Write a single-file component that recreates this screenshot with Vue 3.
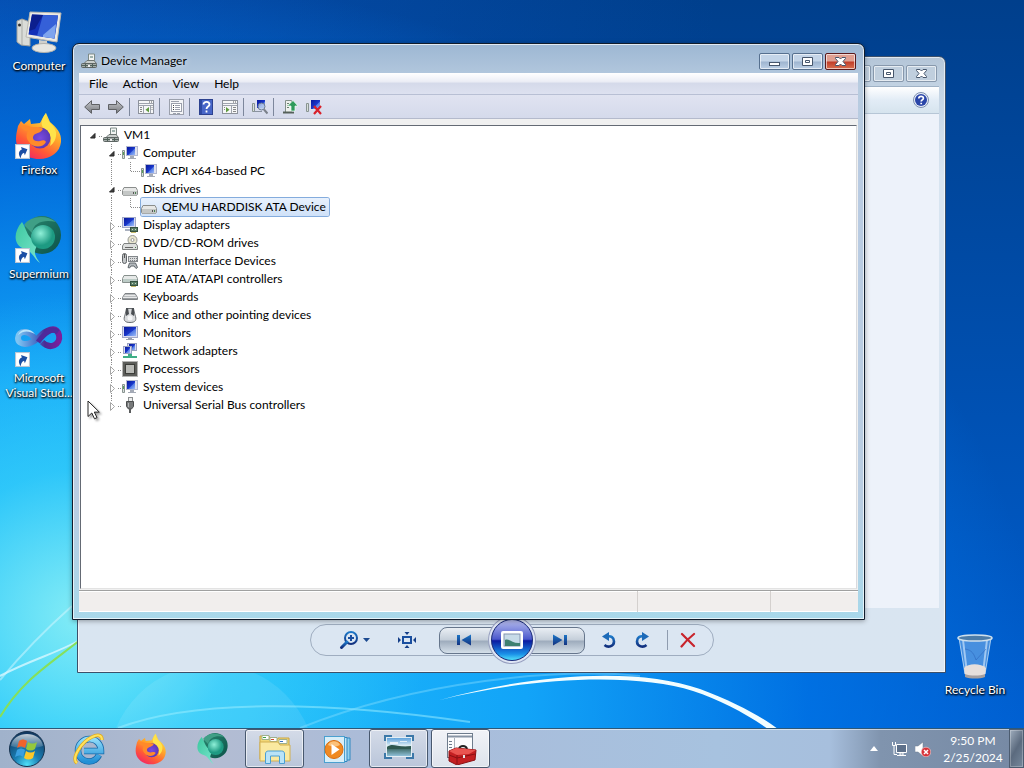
<script setup>
import { ref } from 'vue'

const shortcuts = [
  { label: 'Computer', icon: 'pc-big' },
  { label: 'Firefox', icon: 'firefox', link: true },
  { label: 'Supermium', icon: 'supermium', link: true },
  { label: 'Microsoft Visual Stud...', icon: 'vs', link: true },
]

const menus = ['File', 'Action', 'View', 'Help']

// groups are divided by a thin separator
const tools = [
  [{ icon: 'back', title: 'Back' }, { icon: 'forward', title: 'Forward' }],
  [{ icon: 'pane-left', title: 'Show/Hide Console Tree' }],
  [{ icon: 'props', title: 'Properties' }],
  [{ icon: 'help', title: 'Help' }, { icon: 'pane-right', title: 'Show/Hide Action Pane' }],
  [{ icon: 'scan', title: 'Scan for hardware changes' }],
  [{ icon: 'update', title: 'Update driver' }, { icon: 'uninstall', title: 'Uninstall' }],
]

const nodes = [
  { label: 'VM1', icon: 'toolcase', level: 0, open: true },
  { label: 'Computer', icon: 'pc', level: 1, open: true },
  { label: 'ACPI x64-based PC', icon: 'pc', level: 2 },
  { label: 'Disk drives', icon: 'disk', level: 1, open: true },
  { label: 'QEMU HARDDISK ATA Device', icon: 'disk', level: 2 },
  { label: 'Display adapters', icon: 'display', level: 1 },
  { label: 'DVD/CD-ROM drives', icon: 'dvd', level: 1 },
  { label: 'Human Interface Devices', icon: 'hid', level: 1 },
  { label: 'IDE ATA/ATAPI controllers', icon: 'ide', level: 1 },
  { label: 'Keyboards', icon: 'keyboard', level: 1 },
  { label: 'Mice and other pointing devices', icon: 'mouse', level: 1 },
  { label: 'Monitors', icon: 'monitor', level: 1 },
  { label: 'Network adapters', icon: 'network', level: 1 },
  { label: 'Processors', icon: 'cpu', level: 1 },
  { label: 'System devices', icon: 'pc', level: 1 },
  { label: 'Universal Serial Bus controllers', icon: 'usb', level: 1, last: true },
]
const selected = ref('QEMU HARDDISK ATA Device')

const apps = [
  { icon: 'ie', title: 'Internet Explorer' },
  { icon: 'firefox', title: 'Firefox' },
  { icon: 'supermium', title: 'Supermium' },
  { icon: 'explorer', title: 'Windows Explorer', running: true },
  { icon: 'media', title: 'Windows Media Player' },
  { icon: 'photos', title: 'Windows Photo Viewer', running: true },
  { icon: 'toolbox', title: 'Device Manager', running: true, active: true },
]
</script>

<template>
  <!-- icon sheet -->
  <svg class="sheet" aria-hidden="true">
    <defs>
      <linearGradient id="g-screen" x1="0" y1="0" x2="1" y2="1">
        <stop offset="0" stop-color="#08189a" /><stop offset=".55" stop-color="#1a38cc" />
        <stop offset=".6" stop-color="#5078e4" /><stop offset="1" stop-color="#9dbcf8" />
      </linearGradient>
      <linearGradient id="g-arrow" x1="0" y1="0" x2="0" y2="1">
        <stop offset="0" stop-color="#c4c6ca" /><stop offset="1" stop-color="#77797e" />
      </linearGradient>
      <linearGradient id="g-fox" x1=".8" y1="0" x2=".2" y2="1">
        <stop offset="0" stop-color="#fff04a" /><stop offset=".4" stop-color="#ffa42a" />
        <stop offset=".7" stop-color="#ff5a36" /><stop offset="1" stop-color="#f0206a" />
      </linearGradient>
      <radialGradient id="g-foxcore"><stop offset="0" stop-color="#7a4be0" /><stop offset="1" stop-color="#5a38b8" /></radialGradient>
      <linearGradient id="g-sup" x1="0" y1="0" x2="1" y2="1">
        <stop offset="0" stop-color="#2b8a72" /><stop offset="1" stop-color="#0b5148" />
      </linearGradient>
      <linearGradient id="g-supleaf" x1="0" y1="0" x2="1" y2="1">
        <stop offset="0" stop-color="#3cc79f" /><stop offset="1" stop-color="#7be6cd" />
      </linearGradient>
      <radialGradient id="g-supball" cx=".4" cy=".35"><stop offset="0" stop-color="#8ff0d8" /><stop offset="1" stop-color="#1d9a82" /></radialGradient>
      <linearGradient id="g-vs" x1="0" y1="0" x2="1" y2="0">
        <stop offset="0" stop-color="#7fc4f2" /><stop offset=".4" stop-color="#4a78cc" />
        <stop offset=".65" stop-color="#4b2a94" /><stop offset="1" stop-color="#7a1f9c" />
      </linearGradient>
      <radialGradient id="g-orb" cx=".5" cy=".95" r=".9">
        <stop offset="0" stop-color="#4fe0f8" /><stop offset=".4" stop-color="#1a7fb4" /><stop offset="1" stop-color="#123a62" />
      </radialGradient>
      <linearGradient id="g-orbgloss" x1="0" y1="0" x2="0" y2="1">
        <stop offset="0" stop-color="#fff" stop-opacity=".75" /><stop offset="1" stop-color="#fff" stop-opacity=".1" />
      </linearGradient>
      <linearGradient id="g-ie" x1="0" y1="0" x2="0" y2="1">
        <stop offset="0" stop-color="#8fdcfa" /><stop offset="1" stop-color="#2390d6" />
      </linearGradient>
      <linearGradient id="g-photo" x1="0" y1="0" x2="0" y2="1">
        <stop offset="0" stop-color="#5fa2dc" /><stop offset=".45" stop-color="#e4f2f6" />
        <stop offset=".55" stop-color="#38645e" /><stop offset="1" stop-color="#8fc0d8" />
      </linearGradient>
      <linearGradient id="g-blue" x1="0" y1="0" x2="0" y2="1">
        <stop offset="0" stop-color="#1d78c8" /><stop offset="1" stop-color="#12307e" />
      </linearGradient>
    </defs>

    <symbol id="i-toolcase" viewBox="0 0 16 16">
      <path d="M7.500 8V1h6v7" fill="#f2f4f2" stroke="#7d8a86" />
      <rect x="9" y="3" width="3" height="2" fill="#9fb3ae" />
      <path d="M3 10.500 6 7.500h7l2.500 3z" fill="#c9cecb" stroke="#6d7572" />
      <rect x=".5" y="10.500" width="15" height="4" rx="1" fill="#a6adaa" stroke="#5d6563" />
      <path d="M1 12.500h14M4.500 11v3M11.500 11v3" stroke="#50615a" />
      <rect x="7" y="12" width="2" height="2" fill="#eee" />
    </symbol>
    <symbol id="i-pc" viewBox="0 0 16 16">
      <path d="M.5 5.500h2v8h-2z" fill="#d9dfdc" stroke="#899491" />
      <rect x="1" y="7" width="1" height="3" fill="#58a058" />
      <rect x="4.500" y="1.500" width="11" height="9" fill="#dfe1ee" stroke="#b4b9d0" />
      <rect x="5" y="2" width="8" height="8" fill="url(#g-screen)" />
      <path d="M8 11h4v2h-4zM6 13h8v1H6z" fill="#a4aab6" />
    </symbol>
    <symbol id="i-monitor" viewBox="0 0 16 16">
      <rect x=".5" y="1.500" width="15" height="11" fill="#d8dbf0" stroke="#a2a9c8" />
      <rect x="2" y="2" width="12" height="9" fill="url(#g-screen)" />
      <path d="M6 13h4v1h-4zM4 14h8v1H4z" fill="#9aa1af" />
    </symbol>
    <symbol id="i-disk" viewBox="0 0 16 16">
      <path d="M2 6.500h12l1.500 3v4l-1 1h-13l-1-1v-4z" fill="#e6e7e6" stroke="#8a8d8c" />
      <path d="M1 10h14v3.500l-1 1H2l-1-1z" fill="#c4c7c6" />
      <rect x="11" y="11" width="1" height="2" fill="#555" /><rect x="13" y="11" width="1" height="2" fill="#4a8050" />
    </symbol>
    <symbol id="i-chip" viewBox="0 0 16 16">
      <rect x="8.500" y="10.500" width="7" height="4" fill="#5b7e68" stroke="#35513f" />
      <path d="M10 12h1v1h-1zM13 12h1v1h-1z" fill="#c6d8bf" />
      <path d="M9 15.500h5" stroke="#c7bb6c" />
    </symbol>
    <symbol id="i-display" viewBox="0 0 16 16">
      <rect x=".5" y=".5" width="13" height="10" fill="#d8dbf0" stroke="#a2a9c8" />
      <rect x="2" y="1" width="10" height="8" fill="url(#g-screen)" />
      <path d="M3 12h6v2H3z" fill="#aab1bf" />
      <use href="#i-chip" />
    </symbol>
    <symbol id="i-dvd" viewBox="0 0 16 16">
      <circle cx="10.500" cy="5" r="4.500" fill="#e9e6cf" stroke="#969894" /><circle cx="10.500" cy="5" r="1.500" fill="#fff" stroke="#9a9a9a" />
      <path d="M2 8.500h12l1.500 2.500v3.500H.5V11z" fill="#dcdedd" stroke="#7f8281" />
      <path d="M3 12.500h8" stroke="#666" /><rect x="13" y="12" width="1" height="1" fill="#4a8050" />
    </symbol>
    <symbol id="i-hid" viewBox="0 0 16 16">
      <rect x="6.500" y="3.500" width="9" height="5" fill="#d9dbdc" stroke="#83878b" />
      <path d="M8 5.500h7M8 7.500h7" stroke="#7d8084" stroke-dasharray="1 1" />
      <rect x=".5" y=".5" width="4" height="10" rx="2" fill="#c3c6c8" stroke="#5e6265" />
      <path d="M2.500 1v4" stroke="#555" />
      <path d="M6 14.500 7.500 10h6l2 4.500-1.500 1-2-2.500H9l-1.500 2z" fill="#b4b9bd" stroke="#5f666b" />
    </symbol>
    <symbol id="i-ide" viewBox="0 0 16 16">
      <path d="M2 4.500h12l1.500 3v4h-15v-4z" fill="#e6e9e8" stroke="#87908d" />
      <path d="M1 8h14v3H1z" fill="#bccbc6" />
      <use href="#i-chip" />
    </symbol>
    <symbol id="i-keyboard" viewBox="0 0 16 16">
      <path d="M3 4.500h10l2.500 4v2H.5v-2z" fill="#e8e9ea" stroke="#7f8386" />
      <path d="M3.500 5.500h10M2.500 7.500h12" stroke="#8b8f92" stroke-dasharray="1 1" />
      <path d="M1 9.500h14" stroke="#9a9ea1" />
    </symbol>
    <symbol id="i-mouse" viewBox="0 0 16 16">
      <path d="M4.500 1.500 3 8c-2 5-.5 7.500 5 7.500s7-2.500 5-7.500l-1.500-6.500z" fill="#d9dbdd" stroke="#6a6e71" />
      <path d="M4 1h2l1 6-3 2zM12 1h-2L9 7l3 2z" fill="#4a4e52" /><ellipse cx="8" cy="11" rx="2.500" ry="2.500" fill="#f4f5f6" />
    </symbol>
    <symbol id="i-network" viewBox="0 0 16 16">
      <rect x="5.500" y=".5" width="9" height="7" fill="#d8dbf0" stroke="#9aa2c0" /><rect x="7" y="1" width="6" height="6" fill="url(#g-screen)" />
      <rect x="1.500" y="3.500" width="8" height="7" fill="#d8dbf0" stroke="#9aa2c0" /><rect x="3" y="4" width="5" height="6" fill="url(#g-screen)" />
      <path d="M6 11h4v2h5v2H1v-2h5z" fill="#3fae86" />
    </symbol>
    <symbol id="i-cpu" viewBox="0 0 16 16">
      <rect x=".5" y=".5" width="15" height="15" fill="none" stroke="#6a6b68" stroke-dasharray="1 1" />
      <rect x="1" y="1" width="14" height="14" fill="#5c5d5a" /><rect x="3.500" y="3.500" width="9" height="9" fill="#b9bab6" stroke="#3c3d39" />
    </symbol>
    <symbol id="i-usb" viewBox="0 0 16 16">
      <rect x="6.500" y=".5" width="4" height="4" fill="#eceded" stroke="#8c8f90" />
      <path d="M4.500 4.500h7v5L9.500 12h-3l-2-2.500z" fill="#77797a" stroke="#4c4e4f" /><rect x="7" y="12" width="2" height="4" fill="#5a5c5d" />
      <path d="M6 6h1v4H6z" fill="#b7b9ba" />
    </symbol>

    <symbol id="i-back" viewBox="0 0 16 16">
      <path d="M.7 8 7.500 1.700v3.800h8v5h-8v3.800z" fill="url(#g-arrow)" stroke="#5f6165" stroke-linejoin="round" />
    </symbol>
    <symbol id="i-forward" viewBox="0 0 16 16">
      <path d="M15.300 8 8.500 1.700v3.800h-8v5h8v3.800z" fill="url(#g-arrow)" stroke="#5f6165" stroke-linejoin="round" />
    </symbol>
    <symbol id="i-pane" viewBox="0 0 16 16">
      <rect x=".5" y="1.500" width="15" height="13" fill="#f6f7f8" stroke="#8d929c" />
      <path d="M1 4.500h14M1 6.500h14" stroke="#9fa4ae" /><path d="M11 3h1M13 3h1" stroke="#555" />
    </symbol>
    <symbol id="i-pane-left" viewBox="0 0 16 16">
      <use href="#i-pane" /><path d="M5.500 7v7M12.500 7v7" stroke="#9fa4ae" />
      <path d="M2 8.500h2M2 10.500h2M2 12.500h2M13.500 8.500h1M13.500 10.500h1" stroke="#888" /><path d="M11 8v5.500L7.500 10.700z" fill="#5e9a3e" />
    </symbol>
    <symbol id="i-pane-right" viewBox="0 0 16 16">
      <use href="#i-pane" /><path d="M9.500 7v7" stroke="#9fa4ae" />
      <path d="M11 8.500h3M11 10.500h3M11 12.500h3M2 8.500h1M2 10.500h1" stroke="#888" /><path d="M4 8v5.500l3.500-2.800z" fill="#5e9a3e" />
    </symbol>
    <symbol id="i-props" viewBox="0 0 16 16">
      <rect x="1.500" y=".5" width="14" height="15" fill="#f4f5f7" stroke="#9ba0ac" />
      <rect x="3.500" y="4.500" width="10" height="8" fill="#fff" stroke="#9ba0ac" />
      <path d="M3 2.500h8M7 6.500h5M7 8.500h5M7 10.500h5M5 14.500h3M9 14.500h3" stroke="#9ba0ac" /><path d="M5 6.500h1M5 8.500h1M5 10.500h1" stroke="#444" />
    </symbol>
    <symbol id="i-help" viewBox="0 0 16 16">
      <rect x="1.500" y=".5" width="13" height="15" fill="#4766c8" stroke="#2c418f" /><path d="M2 1h2v14H2z" fill="#2f4aa4" />
      <path d="M5.500 5.500C5.500 2 11.500 2.200 11.500 5.500c0 2-3 2.200-3 4.500M8.500 11.500v2" fill="none" stroke="#fff" stroke-width="1.800" />
    </symbol>
    <symbol id="i-scan" viewBox="0 0 16 16">
      <path d="M.5 4.500h2v8h-2z" fill="#d9dfdc" stroke="#899491" />
      <rect x="4" y="1" width="10" height="9" fill="#dfe2ea" /><rect x="5" y="1" width="8" height="8" fill="url(#g-screen)" />
      <path d="M2 12.500h8" stroke="#8a93a0" /><circle cx="9.500" cy="7.500" r="3.500" fill="#b9cdec" fill-opacity=".8" stroke="#6c7a90" />
      <path d="m12 10.500 3.500 4" stroke="#7a808a" stroke-width="2" />
    </symbol>
    <symbol id="i-update" viewBox="0 0 16 16">
      <path d="M3.500 13V1.500h6V13" fill="#eef1ee" stroke="#84908a" /><path d="M5 4.500h2M5 6.500h2M5 8.500h2" stroke="#6b7d70" />
      <path d="M1 13.500h11" stroke="#55605a" stroke-width="2" />
      <path d="M11 1.500 5.500 7H9v5h4V7h3z" fill="#2f9a5c" stroke="#f0fff4" stroke-width=".7" />
    </symbol>
    <symbol id="i-uninstall" viewBox="0 0 16 16">
      <path d="M.5 4.500h2v8h-2z" fill="#d9dfdc" stroke="#899491" />
      <rect x="4" y="1" width="11" height="10" fill="#dfe2ea" /><rect x="5" y="1" width="9" height="9" fill="url(#g-screen)" />
      <path d="m8 7 7 8M15 7l-7 8" stroke="#d8202a" stroke-width="2.200" />
    </symbol>

    <symbol id="i-pc-big" viewBox="0 0 48 48">
      <path d="m2 13 5-2 8 3v24l-9-1-4-3z" fill="#dadcd8" stroke="#9fa19d" /><path d="M7 11v26" stroke="#a9aba7" />
      <circle cx="4.500" cy="17" r="1.500" fill="#333" />
      <path d="M15 4 46 5 42 34 11 29z" fill="#eceae4" stroke="#b9b8b2" /><path d="M17 6.500 43 7.500 39.500 30.500 13.500 26.500z" fill="#1230b8" />
      <path d="m28 7 15 .5-3.500 23L22 28z" fill="#3560d8" /><path d="m17 6.500 11 .5-8 14-6 2z" fill="#0c1f8e" /><path d="m28 27 13-11-1.500 14.500L28 29z" fill="#7ea4ee" />
      <path d="m24 32 8 1 1 7h-9z" fill="#d0d0cb" /><ellipse cx="29" cy="40" rx="12" ry="4.500" fill="#e6e6e1" stroke="#b1b1ac" />
    </symbol>
    <symbol id="i-firefox" viewBox="0 0 48 48">
      <path d="M3 14 6 9l3 3 6-5 1 5 9-1c2-3 3-7 6-10l4 9c6 5 12 11 11 20-1 10-10 17-22 17C11 47 1 38 1 27c0-5 1-8 2-13z" fill="url(#g-fox)" />
      <path d="M31 1c-1 9 8 10 10 19 1 7-3 12-6 14 2-6 1-13-5-17-5-3-4-9 1-16z" fill="#ffe34a" />
      <circle cx="25" cy="26" r="10.500" fill="url(#g-foxcore)" />
      <path d="M5 14c7-2 9 1 13 1 5 0 8 0 10 2-2 4-7 4-9 6-3 4 1 7 6 6 3-1 5-1 6 1-3 6-13 6-17 0-4-5-2-9-1-11-3 0-6-2-8-5z" fill="#ff8a2a" />
    </symbol>
    <symbol id="i-supermium" viewBox="0 0 48 48">
      <circle cx="27" cy="19" r="19" fill="url(#g-sup)" /><path d="M9 9C15 0 31-2 41 6 30 3 18 6 17 17z" fill="#3f9f86" />
      <path d="M7 6C-2 16-2 30 10 33c8 3 9 10 15 14-9-12-4-14-1-21C13 25 12 14 7 6z" fill="url(#g-supleaf)" />
      <circle cx="28" cy="21" r="12" fill="url(#g-supball)" />
    </symbol>
    <symbol id="i-vs" viewBox="0 0 48 48">
      <path d="M21 21C14 8 3 11 3 18c0 8 12 8 20 0S41 5 44 15c2 10-9 15-17 7" fill="none" stroke="url(#g-vs)" stroke-width="6" />
      <path d="M3 15c3-7 12-7 17-1-6-3-11-4-17 1z" fill="#b9e4fb" /><path d="M23 22c6-8 14-15 20-10" fill="none" stroke="#4f2a9a" stroke-width="5" />
    </symbol>
    <symbol id="i-link" viewBox="0 0 14 14">
      <rect x=".5" y=".5" width="13" height="13" fill="#fff" stroke="#b9c6d4" />
      <path d="M3.500 12.500C2 8 4 5 7 5V2.500L12 6.500l-4 4.500V8.500c-2 0-3.500 1.500-4.500 4z" fill="#1c4fa4" transform="rotate(-18 7 7)" />
    </symbol>
    <symbol id="i-bin" viewBox="0 0 48 48">
      <path d="M8 6h32l-6 36c-3 4-17 4-20 0z" fill="#9ecaf2" fill-opacity=".45" stroke="#c8e2f8" stroke-opacity=".8" />
      <path d="m12 8 4 33M36 8l-4 33" stroke="#dcefff" stroke-opacity=".6" stroke-width="2" />
      <path d="M35 17 25 28M14 17c7 1 9 5 11 11" stroke="#2760b8" stroke-opacity=".5" fill="none" />
      <path d="M13 36c4-5 17-5 22 0l-1 7c-4 3-16 3-20 0z" fill="#e6dfdc" /><path d="M14 42c5 2 15 2 20 0v3c-5 2-15 2-20 0z" fill="#a59fa0" />
      <ellipse cx="24" cy="6" rx="17" ry="3" fill="#4c7ca8" stroke="#cfe0ec" stroke-width="1.500" />
    </symbol>

    <symbol id="i-ie" viewBox="0 0 32 32">
      <path d="M26 22c-2 4-6 6.500-10 6.500C9.500 28.500 5 23.500 5 17.500S10 6 16.500 6 28 11 28 18H11" fill="none" stroke="#1668a8" stroke-width="6.500" />
      <path d="M26 22c-2 4-6 6.500-10 6.500C9.500 28.500 5 23.500 5 17.500S10 6 16.500 6 28 11 28 18H11" fill="none" stroke="url(#g-ie)" stroke-width="5" />
      <path d="M4 30C-2 26 8 9 19 4c6-3 10-2 10 3" fill="none" stroke="#e0a81c" stroke-width="3.500" /><path d="M4 30C-2 26 8 9 19 4c6-3 10-2 10 3" fill="none" stroke="#ffe25c" stroke-width="2" />
    </symbol>
    <symbol id="i-explorer" viewBox="0 0 32 32">
      <path d="M1 3h9l2 3h7v-1h11v21H1z" fill="#f2d878" stroke="#c9a440" /><path d="M3 2.500h7v4H3zM11 4.500h7v4h-7zM20 6.500h8v4h-8z" fill="#fff" stroke="#9fb08c" />
      <path d="M4 4h3v1H4z" fill="#38a048" /><path d="M12 6h3v1h-3z" fill="#d04830" /><path d="M21 8h3v1h-3z" fill="#3870c0" />
      <path d="M1 9h18l2 3h10v16H1z" fill="#fae9a0" stroke="#d2b050" />
      <path d="M6.500 30.500V21c0-2 1-3 3-3h13c2 0 3 1 3 3v9.500h-5V23h-9v7.500z" fill="#b9e3f8" stroke="#4a9fd4" />
    </symbol>
    <symbol id="i-media" viewBox="0 0 32 32">
      <path d="M20 5h9v22h-9z" fill="#8fd0f0" stroke="#3088c0" /><path d="M17 4.500h9v24h-9z" fill="#bfe4f6" stroke="#3088c0" />
      <rect x="3.500" y="3.500" width="20" height="26" fill="#d8eef8" stroke="#4aa0d0" />
      <circle cx="13" cy="16.500" r="9" fill="#f08a22" stroke="#d86c10" /><path d="M7 12c2-5 10-5 12 0-4 2-8 2-12 0z" fill="#fbc27c" /><path d="M10.500 11v11l8-5.500z" fill="#fff" />
    </symbol>
    <symbol id="i-photos" viewBox="0 0 32 32">
      <path d="M1 2h8v6H1zM23 2h8v6h-8zM1 20h8v6H1zM23 20h8v6h-8z" fill="#3c78a8" />
      <rect x="3" y="4" width="26" height="20" fill="#e3eef4" /><rect x="4" y="5" width="24" height="18" fill="url(#g-photo)" />
      <path d="M4 14c6-5 10 1 24-1v3H4z" fill="#2f5850" /><path d="M7 9h8v2H7zM17 8h7v1h-7z" fill="#fff" fill-opacity=".7" />
    </symbol>
    <symbol id="i-toolbox" viewBox="0 0 32 32">
      <rect x="2.500" y=".5" width="25" height="24" fill="#fbfcfd" stroke="#6e7c8c" /><path d="M3 3.500h24" stroke="#8895a4" stroke-width="2" /><path d="M9.500 5v19" stroke="#a8b0ba" />
      <path d="M4 8.500h3M4 11.500h3M4 14.500h3" stroke="#6e7c8c" />
      <path d="M14 16c1-4 7-4 8 0" fill="none" stroke="#222" stroke-width="2" />
      <path d="m4 18 7-3 20 2-1 10-18 5-8-4z" fill="#c41f22" stroke="#8a1013" /><path d="m4 18 7-3 20 2-7 4-12 1z" fill="#ea5450" />
      <path d="M12 22v9M4 22l8 3 18-4" stroke="#8a1013" fill="none" /><path d="M18 22h2v3h-2z" fill="#e6e6e6" />
    </symbol>
  </svg>

  <div class="desktop">
    <svg class="wallpaper" viewBox="0 0 1024 768" preserveAspectRatio="none" aria-hidden="true">
      <circle cx="212" cy="768" r="104" fill="#fff" fill-opacity=".09" />
      <path d="M118 728C190 700 320 700 470 722" fill="none" stroke="#9ff0ff" stroke-opacity=".5" stroke-width="2" />
      <path d="M0 676C30 660 55 654 80 640" fill="none" stroke="#d8f8ff" stroke-opacity=".8" stroke-width="2" />
      <path d="M0 680C25 650 45 630 72 606" fill="none" stroke="#d8f8ff" stroke-opacity=".5" stroke-width="2" />
      <path d="M0 717C22 680 50 664 80 640" fill="none" stroke="#86e05a" stroke-width="2" />
      <path d="M300 728C420 680 560 668 640 676" fill="none" stroke="#8fe0ff" stroke-opacity=".4" stroke-width="2" />
      <path d="M440 700C540 672 640 668 700 689C735 702 762 717 778 729L768 729C745 713 720 700 693 691C640 674 540 675 440 700Z" fill="#f2fdff" />
    </svg>

    <main class="workspace">
      <nav class="shortcuts">
        <a v-for="s in shortcuts" :key="s.label" href="#" class="shortcut">
          <span class="shortcut-pic">
            <svg class="ico48"><use :href="'#i-' + s.icon" /></svg>
            <svg v-if="s.link" class="badge"><use href="#i-link" /></svg>
          </span>
          <span class="shortcut-label">{{ s.label }}</span>
        </a>
      </nav>
      <a href="#" class="shortcut recycle">
        <svg class="ico48"><use href="#i-bin" /></svg>
        <span class="shortcut-label">Recycle Bin</span>
      </a>

      <!-- photo viewer, behind -->
      <section class="viewer" aria-label="Windows Photo Viewer">
        <header class="caption caption--viewer">
          <button class="cap cap--dim" aria-label="Minimize"><svg viewBox="0 0 13 11"><rect x="1.500" y="6.500" width="10" height="3" /></svg></button>
          <button class="cap cap--dim" aria-label="Maximize"><svg viewBox="0 0 13 11"><path d="M1.500 1.500h10v8h-10zM4.500 4.500h4v2h-4z" /></svg></button>
          <button class="cap cap--dim" aria-label="Close"><svg viewBox="0 0 13 11"><path d="M1.500 1.500H5L6.500 3 8 1.500h3.500v1L9 5.500l2.500 3v1H8L6.500 8 5 9.500H1.500v-1l2.500-3-2.500-3z" /></svg></button>
        </header>
        <div class="viewer-body">
          <div class="viewer-bar">
            <button class="bare" aria-label="Help">
              <svg class="ico16" viewBox="0 0 16 16">
                <circle cx="8" cy="8" r="7.500" fill="#e8eef8" stroke="#7d8fb0" /><circle cx="8" cy="8" r="6" fill="#2a45a8" />
                <path d="M5.800 6.500c0-3 4.600-2.800 4.600-.3C10.400 8 8.200 7.800 8.200 9.500M8.200 10.700v1.600" fill="none" stroke="#fff" stroke-width="1.700" />
              </svg>
            </button>
          </div>
        </div>
        <footer class="viewer-foot">
          <div class="pill">
            <button class="bare zoom" aria-label="Change display size">
              <svg width="20" height="20" viewBox="0 0 20 20" fill="none" stroke="url(#g-blue)">
                <circle cx="12" cy="8" r="6" stroke-width="2" /><path d="M8 12 2.500 17.500" stroke-width="3" stroke-linecap="round" /><path d="M9 8h6M12 5v6" stroke="#1a4fa0" stroke-width="2" />
              </svg>
              <svg width="7" height="4" viewBox="0 0 7 4"><path d="M0 0h7L3.500 4z" fill="#1c4a90" /></svg>
            </button>
            <button class="bare fit" aria-label="Actual size">
              <svg width="18" height="18" viewBox="0 0 18 18">
                <rect x="5" y="6" width="8" height="6" fill="none" stroke="#1a4fa0" stroke-width="2" />
                <path d="M6.500 1h5L9 4zM6.500 17h5L9 14zM0 6v6l3-3zM18 6v6l-3-3z" fill="#163f88" />
              </svg>
            </button>
            <div class="transport">
              <button class="step step--prev" aria-label="Previous">
                <svg width="16" height="12" viewBox="0 0 16 12"><path d="M1 1h3v10H1zM15 .5v11L5.500 6z" fill="url(#g-blue)" /></svg>
              </button>
              <button class="play" aria-label="Play slide show">
                <svg width="22" height="18" viewBox="0 0 22 18">
                  <rect width="22" height="18" rx="2" fill="#fff" /><rect x="3" y="3" width="16" height="12" fill="#c7dbe8" stroke="#8496b0" />
                  <path d="M4 9c4-2 8 4 15 3v3H4z" fill="#3f8070" />
                </svg>
              </button>
              <button class="step step--next" aria-label="Next">
                <svg width="16" height="12" viewBox="0 0 16 12"><path d="M12 1h3v10h-3zM1 .5v11L10.500 6z" fill="url(#g-blue)" /></svg>
              </button>
            </div>
            <button class="bare turn" aria-label="Rotate counterclockwise">
              <svg width="16" height="18" viewBox="0 0 16 18">
                <path d="M6 5.500c4-1 7 1 7 5 0 5-6 6.500-9.500 3.500" fill="none" stroke="url(#g-blue)" stroke-width="2.600" /><path d="M1 5.500 8 1v9z" fill="#1d6ab8" />
              </svg>
            </button>
            <button class="bare turn" aria-label="Rotate clockwise">
              <svg width="16" height="18" viewBox="0 0 16 18">
                <path d="M10 5.500c-4-1-7 1-7 5 0 5 6 6.500 9.500 3.500" fill="none" stroke="url(#g-blue)" stroke-width="2.600" /><path d="M15 5.500 8 1v9z" fill="#1d6ab8" />
              </svg>
            </button>
            <span class="pill-sep" />
            <button class="bare" aria-label="Delete">
              <svg width="16" height="16" viewBox="0 0 16 16"><path d="M2 2c4 4 8 8 12 12M14 2C9 6 5 10 1.500 14.500" fill="none" stroke="#c8242c" stroke-width="2.200" stroke-linecap="round" /></svg>
            </button>
          </div>
        </footer>
      </section>

      <!-- device manager -->
      <section class="window" aria-label="Device Manager">
        <header class="caption">
          <svg class="ico16"><use href="#i-toolcase" /></svg>
          <h1 class="title">Device Manager</h1>
          <button class="cap" aria-label="Minimize"><svg viewBox="0 0 13 11"><rect x="1.500" y="6.500" width="10" height="3" /></svg></button>
          <button class="cap" aria-label="Maximize"><svg viewBox="0 0 13 11"><path d="M1.500 1.500h10v8h-10zM4.500 4.500h4v2h-4z" /></svg></button>
          <button class="cap cap--close" aria-label="Close"><svg viewBox="0 0 13 11"><path d="M1.500 1.500H5L6.500 3 8 1.500h3.500v1L9 5.500l2.500 3v1H8L6.500 8 5 9.500H1.500v-1l2.500-3-2.500-3z" /></svg></button>
        </header>
        <div class="client">
          <nav class="menubar">
            <button v-for="m in menus" :key="m" class="bare menu">{{ m }}</button>
          </nav>
          <div class="toolbar">
            <div v-for="(group, i) in tools" :key="i" class="tool-group">
              <button v-for="t in group" :key="t.icon" class="bare" :title="t.title" :aria-label="t.title">
                <svg class="ico16"><use :href="'#i-' + t.icon" /></svg>
              </button>
            </div>
          </div>
          <ul class="tree">
            <li v-for="n in nodes" :key="n.label" class="node" :class="'node--l' + n.level">
              <svg v-if="n.level === 2" class="cell" viewBox="0 0 19 18">
                <path d="M8.500 0v18" class="dots" />
              </svg>
              <svg class="cell" viewBox="0 0 19 18">
                <path v-if="n.level === 2" d="M8.500 0v9M9 9.500h10" class="dots" />
                <template v-else>
                  <path v-if="n.level" :d="n.last ? 'M8.500 0v5' : 'M8.500 0v5M8.500 15v3'" class="dots" />
                  <path d="M15 10.500h4" class="dots" />
                  <path v-if="n.open" d="M11 7.500v4.500H6.500z" class="arrow-open" />
                  <path v-else d="M7.500 6.500v8l4-4z" class="arrow-shut" />
                </template>
              </svg>
              <button class="bare leaf" :class="{ 'leaf--on': n.label === selected }" @click="selected = n.label">
                <svg class="ico16"><use :href="'#i-' + n.icon" /></svg>
                <span>{{ n.label }}</span>
              </button>
            </li>
          </ul>
          <footer class="status"><span /><span /><span /></footer>
        </div>
      </section>

      <svg class="pointer" viewBox="0 0 13 20" aria-hidden="true">
        <path d="M1 1v15.500l3.800-3.500 2.700 5.800 2.500-1.200-2.700-5.500h5z" fill="#fff" stroke="#222" />
      </svg>
    </main>

    <footer class="taskbar">
      <button class="bare start" aria-label="Start">
        <svg width="38" height="38" viewBox="0 0 38 38">
          <circle cx="19" cy="19" r="17.500" fill="url(#g-orb)" stroke="#16324e" />
          <path d="M3 16C5 0 33 0 35 16c-9 3-23 3-32 0z" fill="url(#g-orbgloss)" />
          <path d="M11 11c3-2 5-2 8 0l-2 7c-3-2-5-2-8 0z" fill="#f0622c" /><path d="M20 12c3 2 6 2 9 0l-2 7c-3 2-6 2-9 0z" fill="#94c83c" />
          <path d="M9 20c3-2 5-2 8 0l-2 7c-2-2-5-2-8 0z" fill="#3a9fe0" /><path d="M18 21c3 2 6 2 9 0l-2 7c-3 2-6 2-9 0z" fill="#fcc828" />
        </svg>
      </button>
      <nav class="apps">
        <button
          v-for="a in apps" :key="a.title" class="app" :class="{ 'app--run': a.running, 'app--on': a.active }"
          :title="a.title" :aria-label="a.title"
        >
          <svg class="ico32"><use :href="'#i-' + a.icon" /></svg>
        </button>
      </nav>
      <div class="tray">
        <button class="bare more" aria-label="Show hidden icons"><svg width="8" height="5" viewBox="0 0 8 5"><path d="M4 0l4 5H0z" fill="#fff" /></svg></button>
        <button class="bare" aria-label="Network">
          <svg class="ico16" viewBox="0 0 16 16">
            <path d="M5.500 3.500h10v8h-10zM9 12h3v2H9zM6 14.500h9" fill="#5d708a" stroke="#fff" />
            <path d="M1.500 1v3.500h3V1M3 5v8.500h3" fill="none" stroke="#fff" />
          </svg>
        </button>
        <button class="bare" aria-label="Volume muted">
          <svg class="ico16" viewBox="0 0 16 16">
            <path d="M0 5h3l5-4v14l-5-4H0z" fill="#fff" stroke="#6d7b8c" stroke-width=".5" />
            <circle cx="11" cy="11" r="4.800" fill="#d8343a" stroke="#f4dada" stroke-width=".6" /><path d="m9 9 4 4M13 9l-4 4" stroke="#fff" stroke-width="1.500" />
          </svg>
        </button>
        <time class="clock" datetime="2024-02-25T21:50"><span>9:50 PM</span><span>2/25/2024</span></time>
        <button class="peek" aria-label="Show desktop" />
      </div>
    </footer>
  </div>
</template>

<style>
html, body, #app { height: 100%; }
body { margin: 0; overflow: hidden; }
</style>

<style scoped>
.sheet { position: absolute; width: 0; height: 0; }
.desktop {
  position: relative; display: flex; flex-direction: column; height: 100%; overflow: hidden;
  font: 12px/16px "Segoe UI", Lato, "Open Sans", sans-serif; color: #000;
  background:
    radial-gradient(ellipse 34% 42% at 8% 80%, rgba(150, 245, 245, 0.85), rgba(60, 215, 250, 0.6) 45%, transparent 100%),
    radial-gradient(ellipse 92% 95% at 10% 92%, #25c4fb 0%, #12a4f8 45%, rgba(0, 120, 235, 0.7) 75%, transparent 100%),
    linear-gradient(to right, rgba(8, 88, 200, 0.6), transparent 70%),
    linear-gradient(#003f8c, #0060d4);
}
.wallpaper { position: absolute; inset: 0; width: 100%; height: 100%; }
.workspace { position: relative; flex: 1; min-height: 0; }

.bare { display: flex; align-items: center; padding: 0; border: 0; background: none; color: inherit; font: inherit; }
.ico16 { flex: none; display: block; width: 16px; height: 16px; }
.ico32 { display: block; width: 32px; height: 32px; }
.ico48 { display: block; width: 48px; height: 48px; }

/* desktop shortcuts */
.shortcuts { display: flex; flex-direction: column; padding-top: 8px; width: 78px; }
.shortcut {
  display: flex; flex-direction: column; align-items: center; gap: 2px; height: 104px;
  color: #fff; text-decoration: none; text-align: center; line-height: 15px;
  text-shadow: 1px 1px 2px #000, 0 1px 2px #000;
}
.shortcut-pic { position: relative; }
.badge { position: absolute; left: 0; bottom: 1px; width: 15px; height: 15px; }
.recycle { position: absolute; right: 9px; bottom: -8px; width: 80px; }

/* windows */
.window, .viewer { position: absolute; display: flex; flex-direction: column; box-sizing: border-box; }
.window {
  left: 72px; right: 159px; top: 43px; bottom: 108px; padding: 0 6px 7px;
  border: 1px solid #101c2c; border-radius: 7px 7px 0 0;
  background: linear-gradient(#9db7d3, #b8cce0 40px, #b9cbe2 120px, #b9cde2 80%, #a8d8ea);
  box-shadow: inset 0 0 0 1px rgba(255, 255, 255, 0.7), 0 1px 5px rgba(0, 0, 0, 0.35);
}
.viewer {
  left: 77px; right: 78px; top: 56px; bottom: 55px; padding: 0 6px;
  border: 1px solid #3c506a; border-radius: 7px 7px 0 0;
  background: linear-gradient(#b4c5d7, #c3d3e3 30px, #d8e5f1 120px, #d9e5f1);
  box-shadow: inset 0 0 0 1px rgba(255, 255, 255, 0.6);
}
.caption { display: flex; align-items: center; gap: 2px; height: 29px; padding: 5px 2px 0; box-sizing: border-box; }
.caption--viewer { justify-content: flex-end; padding-top: 3px; }
.title { flex: 1; margin: 0 0 0 2px; font-size: 12px; font-weight: 400; text-shadow: 0 0 6px #fff; }
.cap {
  display: flex; align-items: center; justify-content: center; width: 31px; height: 17px; padding: 0;
  border: 1px solid #56708f; border-radius: 2px;
  background: linear-gradient(#c4d5e8 48%, #9db4cf 52%, #bdd0e6); box-shadow: inset 0 0 0 1px rgba(255, 255, 255, 0.6);
}
.cap svg { width: 13px; height: 11px; fill: #fff; stroke: #46566c; }
.cap--dim { border-color: #8798ac; background: #c0cfde; }
.cap--close { border-color: #5a1a1c; background: linear-gradient(#e0a092 48%, #c03c28 52%, #d87050); }

/* photo viewer */
.viewer-body { flex: 1; border: 1px solid #9fb2c6; border-width: 1px 0 0; background: #edf2fa; }
.viewer-bar {
  display: flex; align-items: center; justify-content: flex-end; height: 26px; padding-right: 10px;
  border-bottom: 1px solid #b6c6d6; background: linear-gradient(#fff, #e2ecf6 50%, #d6e4ee);
}
.viewer-foot { display: flex; align-items: center; justify-content: center; height: 64px; }
.pill {
  display: flex; align-items: center; box-sizing: border-box; width: 404px; height: 32px; padding: 0 16px 0 28px;
  border: 1px solid #9fadc0; border-radius: 16px; background: #dbe6f2;
}
.zoom { gap: 4px; }
.fit { margin: 0 23px 0 28px; }
.transport { display: flex; align-items: center; margin-right: 16px; }
.step {
  display: flex; align-items: center; box-sizing: border-box; width: 59px; height: 27px; padding: 0 16px; border: 1px solid #66768c;
  background: linear-gradient(#e9eef4, #c4ced9 48%, #9dabbc 52%, #d4dfe9);
}
.step--prev { border-radius: 8px 0 0 8px; margin-right: -7px; }
.step--next { border-radius: 0 8px 8px 0; margin-left: -7px; justify-content: flex-end; }
.play {
  position: relative; display: flex; align-items: center; justify-content: center; flex: none; width: 42px; height: 42px; padding: 0;
  border: 1px solid #1a2a7a; border-radius: 50%; background: linear-gradient(#b8bef0, #4a58cc 48%, #0a1aa0 52%, #1a90e8 85%, #50e0fa);
  box-shadow: 0 0 0 2px #dfe6f4, 0 0 0 3px #98a0c0;
}
.turn { margin-right: 17px; }
.pill-sep { width: 1px; height: 20px; margin-right: 12px; background: #8f9caf; }

/* device manager */
.client { flex: 1; min-height: 0; display: flex; flex-direction: column; background: #f0f0f0; }
.menubar { display: flex; height: 21px; padding: 0 2px; border-bottom: 1px solid #b8bfd4; background: linear-gradient(#fff, #eceef6 40%, #d5daea 50%, #dde1f0); }
.menu { padding: 0 7px 0 8px; }
.toolbar { display: flex; align-items: center; height: 23px; padding: 0 5px; border-bottom: 1px solid #b4bacc; background: linear-gradient(#e0e3f1, #d5daeb); }
.tool-group { display: flex; align-items: center; gap: 8px; }
.tool-group + .tool-group::before { content: ""; width: 1px; height: 18px; margin-left: 5px; background: #7d879c; }
.tree {
  flex: 1; min-height: 0; margin: 6px 1px 0; padding: 0 3px; overflow: hidden; list-style: none;
  border: 1px solid #646a74; border-right-color: #d8dade; border-bottom-color: #e3e3e3; background: #fff;
}
.node { display: flex; height: 18px; }
.node--l1, .node--l2 { padding-left: 19px; }
.cell { flex: none; width: 19px; height: 18px; }
.leaf { gap: 5px; padding-right: 3px; white-space: nowrap; }
.leaf--on { border-radius: 2px; background: linear-gradient(#e8f1fd, #cfe1f8); box-shadow: 0 0 0 1px #84acdd; }
.dots { fill: none; stroke: #8c8c8c; stroke-dasharray: 1 1; }
.arrow-open { fill: #404040; stroke: #262626; stroke-width: 1; stroke-linejoin: round; }
.arrow-shut { fill: #fff; stroke: #a6a6a6; }
.status { display: flex; height: 21px; margin-top: 1px; border-top: 1px solid #a0a0a0; background: #f1eeed; box-shadow: inset 0 1px #fff, inset 0 -1px #fff; }
.status span { width: 88px; box-sizing: border-box; border-left: 1px solid #d4d0ce; }
.status span:first-child { flex: 1; border: 0; }
.status span:nth-child(2) { width: 133px; }

.pointer { position: absolute; left: 87px; top: 400px; width: 13px; height: 20px; filter: drop-shadow(2px 2px 1px rgba(0, 0, 0, 0.35)); }

/* taskbar */
.taskbar {
  position: relative; display: flex; align-items: center; height: 39px; border-top: 1px solid #2d5878;
  background: linear-gradient(to right, #a0b2cb, #b3bcd2 20%, #a9bcda 40%, #a7c2df 70%, #a7bfdd 81%, #8094ae 86%, #7689a4);
  box-shadow: inset 0 1px rgba(255, 255, 255, 0.55);
}
.start { margin-left: 8px; }
.apps { display: flex; gap: 3px; margin-left: 13px; }
.app {
  display: flex; align-items: center; justify-content: center; width: 59px; height: 39px; padding: 0;
  border: 1px solid transparent; border-radius: 3px; background: none;
}
.app--run { border-color: #48586e; background: linear-gradient(#d4dbe8, #bac6da); box-shadow: inset 0 0 0 1px rgba(255, 255, 255, 0.6); }
.app--on { background: linear-gradient(#f1f3f7, #dde3ec); }
.tray { display: flex; align-items: center; gap: 8px; margin-left: auto; height: 100%; }
.more { margin-right: 5px; }
.clock { display: flex; flex-direction: column; align-items: center; width: 56px; margin-left: 6px; color: #fff; line-height: 17px; }
.peek { width: 15px; height: 39px; padding: 0; border: 1px solid #4c5c70; background: linear-gradient(120deg, #9fadbd, #5b6a7e 50%, #76889c); box-shadow: inset 0 0 0 1px rgba(255, 255, 255, 0.25); }
</style>
